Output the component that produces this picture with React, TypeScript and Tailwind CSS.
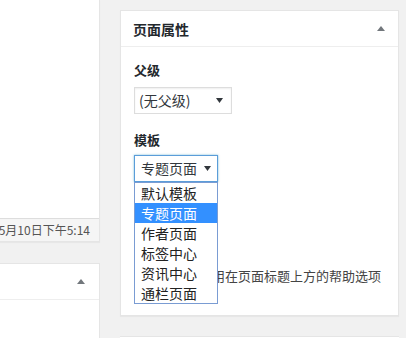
const FONT = "font-['Noto_Sans_CJK_SC','Noto_Sans',sans-serif]";

const TEMPLATES = ['默认模板', '专题页面', '作者页面', '标签中心', '资讯中心', '通栏页面'];

function ToggleUp() {
  return (
    <svg width="8" height="5" viewBox="0 0 8 5" className="shrink-0">
      <path d="M0 5L4 0L8 5Z" fill="#72777c" />
    </svg>
  );
}

function Caret() {
  return (
    <svg width="7" height="5" viewBox="0 0 7 5" className="shrink-0">
      <path d="M0 0H7L3.5 5Z" fill="#32373c" />
    </svg>
  );
}

export default function App() {
  return (
    <div className={`w-[406px] h-[338px] overflow-hidden bg-[#f1f1f1] flex ${FONT}`}>
      {/* Left column */}
      <div className="w-[100px] shrink-0 flex flex-col">
        <div className="h-[242px] shrink-0 bg-white border-r border-b border-[#e5e5e5] flex flex-col shadow-[0_1px_1px_rgba(0,0,0,0.04)]">
          <div className="flex-1" />
          <div className="h-[23px] bg-[#f5f5f5] border-t border-[#dddddd] flex items-center justify-end whitespace-nowrap pr-[9px] text-[12px] text-[#555]">
            5月10日下午5:14
          </div>
        </div>
        <div className="mt-[21px] flex-1 bg-white border-t border-r border-[#e5e5e5]">
          <div className="h-[36px] border-b border-[#eeeeee] flex items-center justify-end pr-[14px]">
            <ToggleUp />
          </div>
        </div>
      </div>

      {/* Right column */}
      <div className="ml-[20px] w-[279px] shrink-0 flex flex-col pt-[10px]">
        <div className="h-[306px] shrink-0 bg-white border border-[#e5e5e5] shadow-[0_1px_1px_rgba(0,0,0,0.04)] flex flex-col">
          {/* Header */}
          <div className="h-[36px] border-b border-[#eeeeee] flex items-center justify-between pl-[12px] pr-[13px]">
            <span className="text-[14px] font-bold text-[#23282d] leading-none">页面属性</span>
            <ToggleUp />
          </div>

          {/* Body */}
          <div className="relative flex-1 pl-[13px] pr-[12px] pt-[14px]">
            <p className="h-[18px] leading-[18px] text-[13px] font-bold text-[#23282d]">父级</p>
            <div className="mt-[8px] w-[98px] h-[27px] border border-[#dddddd] bg-white flex items-center justify-between pl-[4px] pr-[8px] text-[14px] text-[#32373c] shadow-[inset_0_1px_2px_rgba(0,0,0,0.07)]">
              <span>(无父级)</span>
              <Caret />
            </div>

            <p className="mt-[17px] h-[18px] leading-[18px] text-[13px] font-bold text-[#23282d]">模板</p>
            <div className="mt-[6px] w-[84px] h-[27px] border border-[#5b9dd9] bg-white flex items-center justify-between pl-[6px] pr-[6px] text-[14px] text-[#32373c] shadow-[0_0_2px_rgba(30,140,190,0.6)]">
              <span>专题页面</span>
              <Caret />
            </div>

            <p className="mt-[85px] leading-[18px] text-[13px] text-[#444]">
              需要帮助？使用在页面标题上方的帮助选项卡。
            </p>

            {/* Open template list */}
            <ul className="absolute left-[13px] top-[135px] w-[84px] bg-white border border-[#7a9cd3] text-[14px] text-[#222]">
              {TEMPLATES.map((t) => (
                <li
                  key={t}
                  className={`h-[20px] leading-[20px] pl-[6px] ${
                    t === '专题页面' ? 'bg-[#3390ff] text-white' : ''
                  }`}
                >
                  {t}
                </li>
              ))}
            </ul>
          </div>
        </div>

        <div className="mt-[20px] h-[20px] shrink-0 bg-white border-t border-[#e5e5e5]" />
      </div>
    </div>
  );
}
